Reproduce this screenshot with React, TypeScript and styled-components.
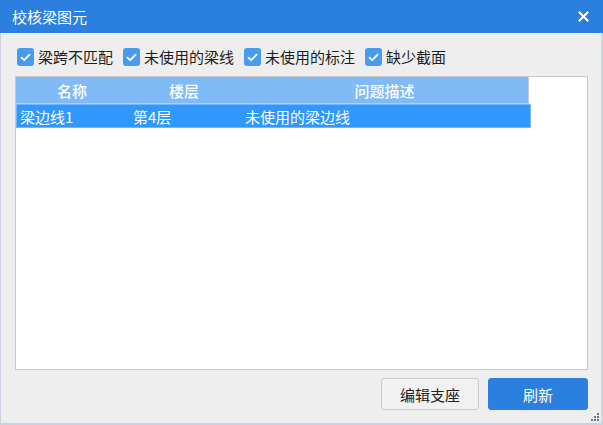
import React from 'react';
import styled, { createGlobalStyle } from 'styled-components';

const GlobalStyle = createGlobalStyle`
  html, body {
    margin: 0;
    padding: 0;
    background: #eeeeee;
  }
  * {
    box-sizing: border-box;
  }
`;

const font = `"Noto Sans CJK SC", "Noto Sans", sans-serif`;

const Window = styled.div`
  width: 603px;
  height: 425px;
  display: flex;
  flex-direction: column;
  background: #eeeeee;
  font-family: ${font};
  position: relative;
`;

const TitleBar = styled.div`
  height: 33px;
  flex: 0 0 auto;
  background: #2b80df;
  color: #ffffff;
  display: flex;
  align-items: center;
  justify-content: space-between;
  padding: 0 14px 0 12px;
  font-size: 15px;
`;

const CloseButton = styled.button`
  border: none;
  background: transparent;
  padding: 0;
  width: 12px;
  height: 12px;
  display: flex;
  align-items: center;
  justify-content: center;
  cursor: pointer;
`;

const Body = styled.div`
  flex: 1;
  display: flex;
  flex-direction: column;
  border-left: 1px solid #c9d2de;
  border-right: 2px solid #d3d8de;
  border-bottom: 2px solid #c9d2de;
  padding: 15px 13px 0 14px;
`;

const FilterRow = styled.div`
  display: flex;
  align-items: center;
  height: 18px;
  gap: 10px;
  margin-left: 2px;
`;

const Check = styled.label`
  display: flex;
  align-items: center;
  gap: 4px;
  font-size: 15px;
  color: #1e1e1e;
  line-height: 18px;
`;

const Box = styled.span`
  width: 17px;
  height: 18px;
  border-radius: 3px;
  background: #4a9af0;
  display: flex;
  align-items: center;
  justify-content: center;
`;

const TableFrame = styled.div`
  margin-top: 10px;
  height: 294px;
  border: 1px solid #c9c9c9;
  background: #ffffff;
  display: flex;
  flex-direction: column;
`;

const Grid = styled.div`
  width: 513px;
  display: grid;
  grid-template-columns: 112px 112px 289px;
`;

const HeaderRow = styled(Grid)`
  height: 27px;
  background: #80bbf8;
  border-right: 1px solid #c3cbd3;
  border-bottom: 1px solid #c3cbd3;
`;

const HeaderCell = styled.div`
  color: #ffffff;
  font-size: 15px;
  font-weight: 500;
  display: flex;
  align-items: center;
  justify-content: center;
`;

const DataRow = styled(Grid)<{ $selected?: boolean }>`
  width: 515px;
  height: 24px;
  background: ${(p) => (p.$selected ? '#3097fc' : '#ffffff')};
  border: 1px solid ${(p) => (p.$selected ? '#76b4f6' : 'transparent')};
  grid-template-columns: 113px 112px 288px;
`;

const DataCell = styled.div<{ $selected?: boolean }>`
  color: ${(p) => (p.$selected ? '#ffffff' : '#1e1e1e')};
  font-size: 15px;
  display: flex;
  align-items: center;
  padding-left: 3px;
  white-space: nowrap;
`;

const Footer = styled.div`
  display: flex;
  justify-content: flex-end;
  gap: 9px;
  margin-top: 8px;
`;

const Button = styled.button<{ $primary?: boolean }>`
  width: ${(p) => (p.$primary ? '100px' : '98px')};
  height: 32px;
  border-radius: 3px;
  font-family: ${font};
  font-size: 15px;
  cursor: pointer;
  background: ${(p) => (p.$primary ? '#2b80df' : '#f1f1f1')};
  color: ${(p) => (p.$primary ? '#ffffff' : '#222222')};
  border: 1px solid ${(p) => (p.$primary ? '#2b80df' : '#c7ccd3')};
`;

const Grip = styled.svg`
  position: absolute;
  right: 4px;
  bottom: 4px;
`;

const CheckMark = () => (
  <svg width="11" height="9" viewBox="0 0 11 9">
    <path d="M1.5 4.6 L4.2 7.2 L9.6 1.6" fill="none" stroke="#ffffff" strokeWidth="1.8" strokeLinecap="round" strokeLinejoin="round" />
  </svg>
);

const filters = ['梁跨不匹配', '未使用的梁线', '未使用的标注', '缺少截面'];

const rows = [{ name: '梁边线1', floor: '第4层', desc: '未使用的梁边线', selected: true }];

export default function App() {
  return (
    <>
      <GlobalStyle />
      <Window>
        <TitleBar>
          <span>校核梁图元</span>
          <CloseButton aria-label="关闭">
            <svg width="11" height="11" viewBox="0 0 11 11">
              <path d="M1.5 1.5 L9.5 9.5 M9.5 1.5 L1.5 9.5" stroke="#ffffff" strokeWidth="2" strokeLinecap="square" />
            </svg>
          </CloseButton>
        </TitleBar>
        <Body>
          <FilterRow>
            {filters.map((f) => (
              <Check key={f}>
                <Box>
                  <CheckMark />
                </Box>
                {f}
              </Check>
            ))}
          </FilterRow>
          <TableFrame>
            <HeaderRow>
              <HeaderCell>名称</HeaderCell>
              <HeaderCell>楼层</HeaderCell>
              <HeaderCell>问题描述</HeaderCell>
            </HeaderRow>
            {rows.map((r) => (
              <DataRow key={r.name} $selected={r.selected}>
                <DataCell $selected={r.selected}>{r.name}</DataCell>
                <DataCell $selected={r.selected}>{r.floor}</DataCell>
                <DataCell $selected={r.selected}>{r.desc}</DataCell>
              </DataRow>
            ))}
          </TableFrame>
          <Footer>
            <Button>编辑支座</Button>
            <Button $primary>刷新</Button>
          </Footer>
        </Body>
        <Grip width="9" height="9" viewBox="0 0 9 9">
          {[
            [7, 1],
            [4, 4],
            [7, 4],
            [1, 7],
            [4, 7],
            [7, 7],
          ].map(([x, y]) => (
            <rect key={`${x}-${y}`} x={x} y={y} width="2" height="2" fill="#6b7580" />
          ))}
        </Grip>
      </Window>
    </>
  );
}
